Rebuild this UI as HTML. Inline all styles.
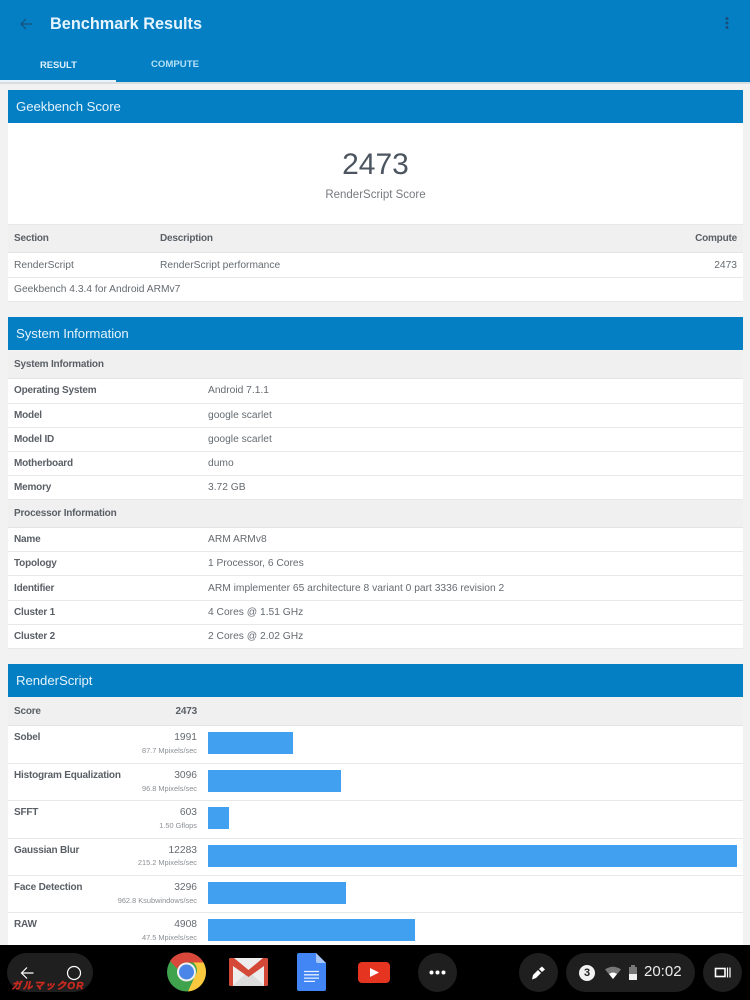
<!DOCTYPE html>
<html><head><meta charset="utf-8"><style>
html,body{margin:0;padding:0;width:750px;height:1000px;overflow:hidden;background:#f2f2f3;font-family:"Liberation Sans",sans-serif}
div{position:absolute;white-space:nowrap}
.hd{left:8px;width:735px;height:33px;background:#047fc4;color:#e4f3fb;font-size:13.2px;letter-spacing:-.05px;line-height:34px;text-indent:8px}
.w{left:8px;width:735px;background:#fff;box-shadow:0 1px 0 #e8e8e8}
.g{left:8px;width:735px;background:#f0f0f0;box-shadow:0 1px 0 #e4e4e4}
.b{font-size:10px;letter-spacing:-.2px;font-weight:bold;color:#5a5f66;line-height:14px;height:14px;margin-top:1px}
.t{font-size:10.25px;color:#666b70;line-height:14px;height:14px;margin-top:1px}
.r{text-align:right}
.s{font-size:7.4px;color:#8b8f94;line-height:10px;height:10px;text-align:right;left:97px;width:100px;margin-top:1px}
.bar{left:208px;height:22px;background:#42a0f0}
.c{background:#1f1f1f;border-radius:20px}
</style></head><body>
<div style="left:0;top:0;width:750px;height:82px;background:#047fc4"></div>
<div style="left:0;top:80px;width:116px;height:2px;background:#e8f4fb"></div>
<div style="left:0;top:82px;width:750px;height:2px;background:#d9dde0"></div>
<svg style="position:absolute;left:18px;top:16px" width="16" height="16" viewBox="0 0 16 16"><path d="M14 8H3M8 3L3 8l5 5" fill="none" stroke="#1a4f7c" stroke-width="1.2"/></svg>
<div style="left:50px;top:14px;font-size:16.3px;font-weight:bold;color:#e6f5fd;line-height:21px">Benchmark Results</div>
<div style="left:40px;top:58px;font-size:9.4px;font-weight:bold;color:#dff2fb;line-height:14px">RESULT</div>
<div style="left:151px;top:58px;font-size:9.6px;font-weight:bold;color:#b5e0f5;line-height:14px">COMPUTE</div>
<svg style="position:absolute;left:724px;top:16px" width="6" height="14"><circle cx="3" cy="2.500" r="1.500" fill="#1a4f7c"/><circle cx="3" cy="7" r="1.500" fill="#1a4f7c"/><circle cx="3" cy="11.500" r="1.500" fill="#1a4f7c"/></svg>

<div class="hd" style="top:90px">Geekbench Score</div>
<div class="w" style="top:123px;height:101px"></div>
<div style="left:8px;width:735px;top:148px;text-align:center;font-size:30px;color:#4c5560;line-height:34px">2473</div>
<div style="left:8px;width:735px;top:188px;text-align:center;font-size:11.5px;color:#777b80;line-height:15px">RenderScript Score</div>
<div class="g" style="top:225px;height:27px"></div>
<div class="b" style="left:14px;top:231px">Section</div>
<div class="b" style="left:160px;top:231px">Description</div>
<div class="b r" style="left:637px;width:100px;top:231px">Compute</div>
<div class="w" style="top:253px;height:24px"></div>
<div class="t" style="left:14px;top:258px">RenderScript</div>
<div class="t" style="left:160px;top:258px">RenderScript performance</div>
<div class="t r" style="left:637px;width:100px;top:258px">2473</div>
<div class="w" style="top:278px;height:23px"></div>
<div class="t" style="left:14px;top:282px">Geekbench 4.3.4 for Android ARMv7</div>

<div class="hd" style="top:317px">System Information</div>
<div class="g" style="top:351px;height:27px"></div>
<div class="b" style="left:14px;top:357px">System Information</div>
<div class="w" style="top:379px;height:24px"></div>
<div class="b" style="left:14px;top:383px">Operating System</div><div class="t" style="left:208px;top:383px">Android 7.1.1</div>
<div class="w" style="top:404px;height:23px"></div>
<div class="b" style="left:14px;top:408px">Model</div><div class="t" style="left:208px;top:408px">google scarlet</div>
<div class="w" style="top:428px;height:23px"></div>
<div class="b" style="left:14px;top:432px">Model ID</div><div class="t" style="left:208px;top:432px">google scarlet</div>
<div class="w" style="top:452px;height:23px"></div>
<div class="b" style="left:14px;top:456px">Motherboard</div><div class="t" style="left:208px;top:456px">dumo</div>
<div class="w" style="top:476px;height:23px"></div>
<div class="b" style="left:14px;top:480px">Memory</div><div class="t" style="left:208px;top:480px">3.72 GB</div>
<div class="g" style="top:500px;height:27px"></div>
<div class="b" style="left:14px;top:506px">Processor Information</div>
<div class="w" style="top:528px;height:23px"></div>
<div class="b" style="left:14px;top:532px">Name</div><div class="t" style="left:208px;top:532px">ARM ARMv8</div>
<div class="w" style="top:552px;height:23px"></div>
<div class="b" style="left:14px;top:556px">Topology</div><div class="t" style="left:208px;top:556px">1 Processor, 6 Cores</div>
<div class="w" style="top:576px;height:24px"></div>
<div class="b" style="left:14px;top:581px">Identifier</div><div class="t" style="left:208px;top:581px">ARM implementer 65 architecture 8 variant 0 part 3336 revision 2</div>
<div class="w" style="top:601px;height:23px"></div>
<div class="b" style="left:14px;top:605px">Cluster 1</div><div class="t" style="left:208px;top:605px">4 Cores @ 1.51 GHz</div>
<div class="w" style="top:625px;height:23px"></div>
<div class="b" style="left:14px;top:629px">Cluster 2</div><div class="t" style="left:208px;top:629px">2 Cores @ 2.02 GHz</div>

<div class="hd" style="top:664px">RenderScript</div>
<div class="g" style="top:698px;height:27px"></div>
<div class="b" style="left:14px;top:704px">Score</div>
<div class="b r" style="left:97px;width:100px;top:704px">2473</div>

<div class="w" style="top:726px;height:37px"></div>
<div class="b" style="left:14px;top:730px">Sobel</div><div class="t r" style="left:97px;width:100px;top:730px">1991</div><div class="s" style="top:745px">87.7 Mpixels/sec</div><div class="bar" style="top:732px;width:85px"></div>
<div class="w" style="top:764px;height:36px"></div>
<div class="b" style="left:14px;top:768px">Histogram Equalization</div><div class="t r" style="left:97px;width:100px;top:768px">3096</div><div class="s" style="top:783px">96.8 Mpixels/sec</div><div class="bar" style="top:770px;width:133px"></div>
<div class="w" style="top:801px;height:37px"></div>
<div class="b" style="left:14px;top:805px">SFFT</div><div class="t r" style="left:97px;width:100px;top:805px">603</div><div class="s" style="top:820px">1.50 Gflops</div><div class="bar" style="top:807px;width:21px"></div>
<div class="w" style="top:839px;height:36px"></div>
<div class="b" style="left:14px;top:843px">Gaussian Blur</div><div class="t r" style="left:97px;width:100px;top:843px">12283</div><div class="s" style="top:857px">215.2 Mpixels/sec</div><div class="bar" style="top:845px;width:529px"></div>
<div class="w" style="top:876px;height:36px"></div>
<div class="b" style="left:14px;top:880px">Face Detection</div><div class="t r" style="left:97px;width:100px;top:880px">3296</div><div class="s" style="top:895px">962.8 Ksubwindows/sec</div><div class="bar" style="top:882px;width:138px"></div>
<div class="w" style="top:913px;height:32px"></div>
<div class="b" style="left:14px;top:917px">RAW</div><div class="t r" style="left:97px;width:100px;top:917px">4908</div><div class="s" style="top:932px">47.5 Mpixels/sec</div><div class="bar" style="top:919px;width:207px"></div>

<div style="left:0;top:945px;width:750px;height:55px;background:#000"></div>
<div class="c" style="left:7px;top:953px;width:86px;height:39px"></div>
<svg style="position:absolute;left:18px;top:964px" width="70" height="18" viewBox="0 0 70 18"><path d="M15.500 9H3.500M9 3.500L3.500 9L9 14.500" fill="none" stroke="#fff" stroke-width="1.200"/><circle cx="56" cy="9" r="6.500" fill="none" stroke="#fff" stroke-width="1.200"/></svg>
<div style="left:10px;top:981px;width:76px;font-size:10px;font-weight:bold;font-style:italic;color:#c92a1f;line-height:11px;letter-spacing:1.200px;text-align:center;-webkit-text-stroke:.4px #c92a1f;font-family:'Liberation Sans','Noto Sans CJK JP',sans-serif">ガルマックOR</div>

<svg style="position:absolute;left:166px;top:952px" width="42" height="40" viewBox="0 0 42 40">
<circle cx="20.500" cy="20" r="19.500" fill="#3fa34d"/>
<path d="M20.500 .5A19.500 19.500 0 0 1 37.500 10.500H20.500A9.500 9.500 0 0 0 11.500 17L4 9A19.500 19.500 0 0 1 20.500 .5Z" fill="#d9483b"/>
<path d="M37.500 10.500A19.500 19.500 0 0 1 22 39.500L29 24A9.500 9.500 0 0 0 27 10.500Z" fill="#fbc93d"/>
<circle cx="20.500" cy="20" r="9.500" fill="#f1f1f1"/><circle cx="20.500" cy="20" r="7.500" fill="#4a86e8"/></svg>
<svg style="position:absolute;left:229px;top:957px" width="40" height="30" viewBox="0 0 40 30">
<rect x="0" y="1" width="39" height="28" rx="2" fill="#ededed"/>
<path d="M3.500 29L19.500 14L35.500 29Z" fill="#dcdcdc"/>
<path d="M2 1H5L19.500 13L34 1H37a2 2 0 0 1 2 2V27a2 2 0 0 1-2 2H35V9L19.500 20L4 9V29H2a2 2 0 0 1-2-2V3a2 2 0 0 1 2-2Z" fill="#d34836"/></svg>
<svg style="position:absolute;left:297px;top:953px" width="29" height="39" viewBox="0 0 29 39">
<path d="M2 0H19L29 10V36a2 2 0 0 1-2 2H2a2 2 0 0 1-2-2V2a2 2 0 0 1 2-2Z" fill="#4285f4"/>
<path d="M19 0L29 10H21a2 2 0 0 1-2-2Z" fill="#a9c6f8"/>
<path d="M7 18.500H22M7 21.800H22M7 25.100H22M7 28.400H18" stroke="#e8f0fe" stroke-width="1.300"/></svg>
<svg style="position:absolute;left:358px;top:962px" width="32" height="22" viewBox="0 0 32 22">
<rect width="32" height="21" rx="4" fill="#e5341f"/><path d="M12 6L21 10.500L12 15Z" fill="#fff"/></svg>
<div class="c" style="left:418px;top:953px;width:39px;height:39px"></div>
<svg style="position:absolute;left:429px;top:969px" width="17" height="7"><circle cx="2.500" cy="3.500" r="2" fill="#fff"/><circle cx="8.500" cy="3.500" r="2" fill="#fff"/><circle cx="14.500" cy="3.500" r="2" fill="#fff"/></svg>
<div class="c" style="left:519px;top:953px;width:39px;height:39px"></div>
<svg style="position:absolute;left:531px;top:966px" width="15" height="15" viewBox="0 0 15 15"><path d="M1 13.500L2 9L7 4L10 7L5 12Z" fill="#fff"/><path d="M8 3L11 .5L14 3.500L11 6Z" fill="#fff"/></svg>
<div class="c" style="left:566px;top:953px;width:129px;height:39px"></div>
<div style="left:579px;top:965px;width:16px;height:16px;border-radius:8px;background:#f2f2f2;color:#222;font-size:11px;font-weight:bold;line-height:16px;text-align:center">3</div>
<svg style="position:absolute;left:605px;top:966px" width="16" height="13" viewBox="0 0 16 13"><path d="M0 3.500Q8 -2 16 3.500L8 13Z" fill="#777"/><path d="M4 8Q8 5 12 8L8 13Z" fill="#fff"/></svg>
<svg style="position:absolute;left:628px;top:965px" width="10" height="15" viewBox="0 0 10 15"><path d="M3 0H7V2H9V15H1V2H3Z" fill="#777"/><rect x="1" y="9" width="8" height="6" fill="#f0f0f0"/></svg>
<div style="left:644px;top:963px;font-size:15px;color:#ececec;line-height:18px">20:02</div>
<div class="c" style="left:703px;top:953px;width:39px;height:39px"></div>
<svg style="position:absolute;left:714px;top:967px" width="17" height="11" viewBox="0 0 17 11"><rect x="1.500" y="1.500" width="9.500" height="8" fill="none" stroke="#fff" stroke-width="1.600"/><path d="M13.500 .5V10.500M16 .5V10.500" stroke="#fff" stroke-width="1.200"/></svg>
</body></html>
